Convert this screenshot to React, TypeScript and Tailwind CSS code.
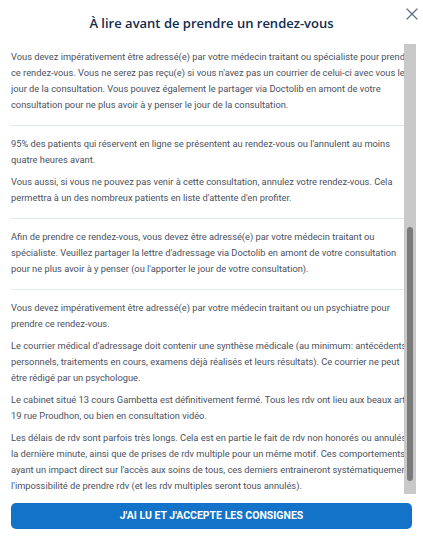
import React from "react";

const sections: string[][] = [
  [
    "Vous devez impérativement être adressé(e) par votre médecin traitant ou spécialiste pour prendre ce rendez-vous. Vous ne serez pas reçu(e) si vous n'avez pas un courrier de celui-ci avec vous le jour de la consultation. Vous pouvez également le partager via Doctolib en amont de votre consultation pour ne plus avoir à y penser le jour de la consultation.",
  ],
  [
    "95% des patients qui réservent en ligne se présentent au rendez-vous ou l'annulent au moins quatre heures avant.",
    "Vous aussi, si vous ne pouvez pas venir à cette consultation, annulez votre rendez-vous. Cela permettra à un des nombreux patients en liste d'attente d'en profiter.",
  ],
  [
    "Afin de prendre ce rendez-vous, vous devez être adressé(e) par votre médecin traitant ou spécialiste. Veuillez partager la lettre d'adressage via Doctolib en amont de votre consultation pour ne plus avoir à y penser (ou l'apporter le jour de votre consultation).",
  ],
  [
    "Vous devez impérativement être adressé(e) par votre médecin traitant ou un psychiatre pour prendre ce rendez-vous.",
    "Le courrier médical d'adressage doit contenir une synthèse médicale (au minimum: antécédents personnels, traitements en cours, examens déjà réalisés et leurs résultats). Ce courrier ne peut être rédigé par un psychologue.",
    "Le cabinet situé 13 cours Gambetta est définitivement fermé. Tous les rdv ont lieu aux beaux arts 19 rue Proudhon, ou bien en consultation vidéo.",
    "Les délais de rdv sont parfois très longs. Cela est en partie le fait de rdv non honorés ou annulés la dernière minute, ainsi que de prises de rdv multiple pour un même motif. Ces comportements ayant un impact direct sur l'accès aux soins de tous, ces derniers entraineront systématiquement l'impossibilité de prendre rdv (et les rdv multiples seront tous annulés).",
  ],
];

export default function App() {
  return (
    <div className="w-[423px] h-[544px] bg-white relative flex flex-col" style={{ fontFamily: "Roboto, 'Liberation Sans', sans-serif" }}>
      <div className="h-[44px] flex items-center justify-center pt-[4px]">
        <h1 className="text-[13px] font-semibold text-[#132b4e]" style={{ fontFamily: "'Open Sans', 'Noto Sans', sans-serif" }}>
          À lire avant de prendre un rendez-vous
        </h1>
      </div>
      <button className="absolute top-[7px] right-[4px] w-[14px] h-[14px] flex items-center justify-center text-[#5b6c86]" aria-label="close">
        <svg width="12" height="12" viewBox="0 0 12 12" fill="none" stroke="currentColor" strokeWidth="1.2" strokeLinecap="round">
          <path d="M1 1L11 11M11 1L1 11" />
        </svg>
      </button>
      <div className="h-[450px] flex pl-[11px]">
        <div className="w-[393px] overflow-hidden">
          <div className="w-[404px] mt-[-5px] text-[9.3px] leading-[16px] text-[#4a5160]">
            {sections.map((paras, i) => (
              <div key={i} className={`pt-[10px] pb-[12px] ${i < sections.length - 1 ? "border-b border-[#e2e9f1]" : ""}`}>
                {paras.map((p, j) => (
                  <p key={j} className={j < paras.length - 1 ? "mb-[6px]" : ""}>
                    {p}
                  </p>
                ))}
              </div>
            ))}
          </div>
        </div>
        <div className="w-[12px] bg-[#c9c9c9] flex flex-col pt-[183px] pb-[13px] px-[3px]">
          <div className="flex-1 rounded-[4px] bg-[#7b7b7b]" />
        </div>
      </div>
      <div className="px-[11px] pt-[9px]">
        <button className="w-[401px] h-[26px] rounded-[5px] bg-[#1273c9] text-white text-[10.5px] font-bold uppercase flex items-center justify-center">
          J'ai lu et j'accepte les consignes
        </button>
      </div>
    </div>
  );
}
